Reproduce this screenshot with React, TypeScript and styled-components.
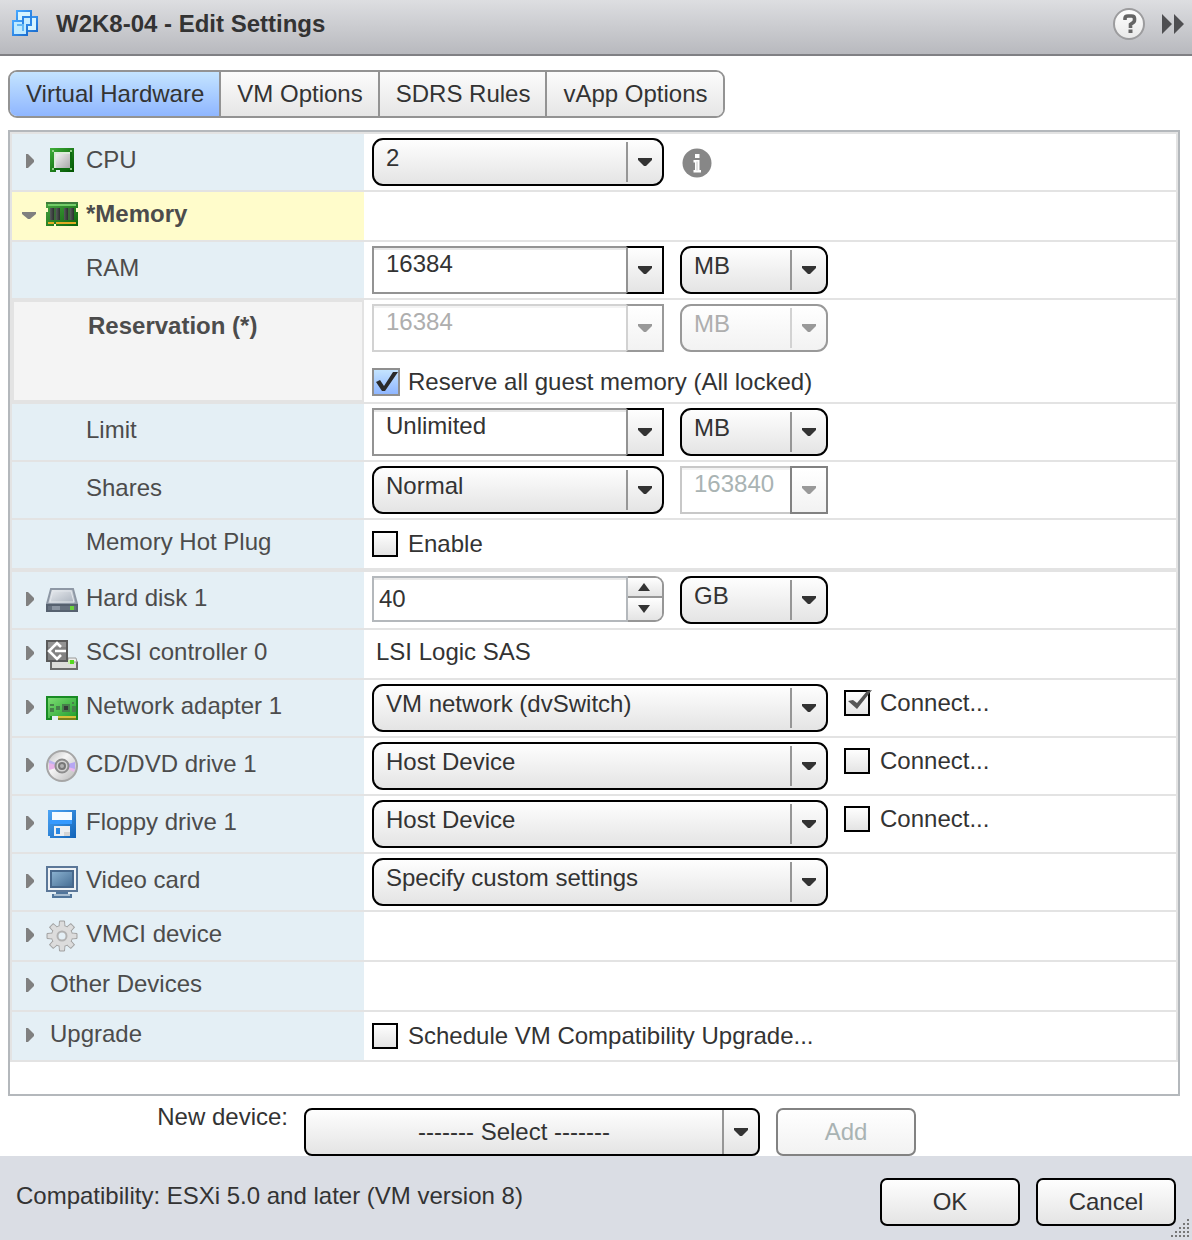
import React, { useState } from "react";
import styled, { createGlobalStyle, css } from "styled-components";

const FONT = '"Liberation Sans", Arial, Helvetica, sans-serif';
const FACE = "linear-gradient(#fefefe, #e4e4e4)";
const FACE_DISABLED = "linear-gradient(#ffffff, #f2f2f2)";
const LINE = "#e3e3e3";

const GlobalStyle = createGlobalStyle`
  *, *::before, *::after { box-sizing: border-box; }
  body { margin: 0; background: #fff; }
  body, button, input, select {
    font-family: ${FONT};
    font-size: 24px;
    line-height: 26px;
    color: #333;
  }
  svg { display: block; flex: none; }
`;

const Dialog = styled.main`
  display: flex;
  flex-direction: column;
  min-height: 100vh;
`;

const TitleBar = styled.header`
  display: flex;
  align-items: center;
  gap: 18px;
  height: 56px;
  padding: 0 7px 6px 12px;
  background: linear-gradient(#dddee1, #b8b9be);
  border-bottom: 2px solid #808084;
`;

const Title = styled.h1`
  flex: 1;
  margin: 0;
  font-size: 24px;
  line-height: 26px;
`;

const TitleActions = styled.div`
  display: flex;
  align-items: center;
  gap: 16px;
`;

const IconButton = styled.button`
  display: flex;
  padding: 0;
  border: 0;
  background: none;
  cursor: pointer;
`;

const Tabs = styled.div`
  display: flex;
  align-self: flex-start;
  height: 48px;
  margin: 14px 8px 12px;
  border: 2px solid #939393;
  border-radius: 9px;
  overflow: hidden;
`;

const Tab = styled.button<{ $active: boolean }>`
  padding: 0 15px 0 16px;
  border: 0;
  background: ${(p) => (p.$active ? "linear-gradient(#c4e4ff, #8fb6ff)" : "linear-gradient(#fcfcfc, #e6e6e6)")};
  white-space: nowrap;
  & + & { border-left: 2px solid #939393; }
`;

const Panel = styled.section`
  margin: 0 12px 0 8px;
  padding-bottom: 32px;
  border: 2px solid #b4b8bc;
`;

const Rows = styled.div`
  border: 2px solid ${LINE};
  border-bottom: 0;
`;

const RowGrid = styled.div<{ $groupEnd?: boolean }>`
  display: grid;
  grid-template-columns: 352px minmax(0, 1fr);
  border-bottom: ${(p) => (p.$groupEnd ? 4 : 2)}px solid ${LINE};
`;

type Tone = "plain" | "changed" | "locked";

const LabelCell = styled.div<{ $tone: Tone; $sub: boolean }>`
  display: flex;
  align-items: center;
  gap: 8px;
  min-height: 48px;
  padding-left: ${(p) => (p.$sub ? 74 : 10)}px;
  color: #4c4c4c;
  background: #e4eff5;
  ${(p) => p.$tone === "changed" && css`background: #fffccb; font-weight: bold;`}
  ${(p) =>
    p.$tone === "locked" &&
    css`
      align-items: flex-start;
      padding-top: 11px;
      background: #f4f4f4;
      border: 2px solid ${LINE};
      font-weight: bold;
    `}
`;

const LabelText = styled.span<{ $indent?: boolean }>`
  padding-bottom: 4px;
  padding-left: ${(p) => (p.$indent ? 4 : 0)}px;
`;

const ValueCell = styled.div`
  display: flex;
  flex-direction: column;
  justify-content: center;
  gap: 16px;
  padding: 0 8px;
`;

const Controls = styled.div`
  display: flex;
  align-items: center;
  gap: 16px;
  padding: 4px 0;
`;

const LockedControls = styled.div`
  display: flex;
  flex-direction: column;
  gap: 16px;
  padding: 4px 0 6px;
`;

const Line = styled.div`
  display: flex;
  gap: 16px;
`;

const ValueText = styled.span`
  padding: 0 4px 4px;
`;

type Size = "small" | "medium" | "large";
const WIDTH: Record<Size, number> = { small: 148, medium: 292, large: 456 };

const SelectFrame = styled.div<{ $size: Size }>`
  display: grid;
  flex: none;
  width: ${(p) => WIDTH[p.$size]}px;
  height: 48px;
  > * { grid-area: 1 / 1; }
`;

const NativeSelect = styled.select<{ $centered?: boolean }>`
  appearance: none;
  width: 100%;
  height: 48px;
  margin: 0;
  padding: 0 38px 8px 12px;
  border: 2px solid #000;
  border-radius: 11px;
  background: ${FACE};
  ${(p) => p.$centered && css`padding: 0 36px 0 0; border-radius: 8px; text-align-last: center;`}
  &:disabled {
    opacity: 1;
    color: #aeaeae;
    border-color: #999;
    background: ${FACE_DISABLED};
  }
`;

const SelectArrow = styled.span<{ $full?: boolean; $disabled?: boolean }>`
  display: flex;
  align-items: center;
  justify-content: center;
  justify-self: end;
  align-self: center;
  width: 38px;
  height: ${(p) => (p.$full ? 44 : 40)}px;
  padding-right: 2px;
  border-left: 2px solid ${(p) => (p.$disabled ? "#d2d2d2" : "#969696")};
  color: ${(p) => (p.$disabled ? "#999" : "#333")};
  pointer-events: none;
`;

const ComboFrame = styled.div<{ $size: Size }>`
  display: flex;
  flex: none;
  width: ${(p) => WIDTH[p.$size]}px;
  height: 48px;
`;

const ComboInput = styled.input<{ $boxed?: boolean }>`
  flex: 1;
  min-width: 0;
  padding: 0 8px 12px 12px;
  border: 2px solid #939393;
  border-right: 0;
  border-radius: 0;
  background: #fff;
  box-shadow: inset 0 2px #e8e8e8;
  &:disabled {
    color: ${(p) => (p.$boxed ? "#a9b3b3" : "#aeaeae")};
    border-color: ${(p) => (p.$boxed ? "#c8c8c8" : "#d2d2d2")};
    box-shadow: inset 0 2px #f3f3f3;
  }
`;

const ComboButton = styled.button<{ $boxed?: boolean }>`
  display: flex;
  align-items: center;
  justify-content: center;
  width: 38px;
  padding: 0;
  border: 2px solid #000;
  border-left-color: #939393;
  background: ${FACE};
  color: #333;
  &:disabled {
    color: #999;
    border-color: ${(p) => (p.$boxed ? "#828282" : "#999")};
    border-left-color: ${(p) => (p.$boxed ? "#828282" : "#d2d2d2")};
    background: ${FACE_DISABLED};
  }
`;

const SpinnerFrame = styled.div`
  display: flex;
  flex: none;
  align-self: flex-start;
  width: 292px;
  height: 46px;
`;

const SpinnerInput = styled.input`
  flex: 1;
  min-width: 0;
  padding: 0 5px;
  border: 2px solid #b4b8bc;
  border-radius: 0;
  background: #fff;
  box-shadow: inset 0 2px #e8e8e8;
  appearance: textfield;
  &::-webkit-inner-spin-button { appearance: none; margin: 0; }
`;

const SpinnerButtons = styled.div`
  display: grid;
  grid-template-rows: 18px 1fr;
  width: 36px;
  border: 2px solid #969696;
  border-left: 0;
  border-radius: 0 9px 9px 0;
  overflow: hidden;
`;

const SpinnerButton = styled.button`
  display: flex;
  align-items: center;
  justify-content: center;
  padding: 0 2px 0 0;
  border: 0;
  background: ${FACE};
  & + & { border-top: 2px solid #969696; }
`;

const CheckLabel = styled.label<{ $top?: boolean }>`
  display: grid;
  grid-template-columns: 28px auto;
  align-items: center;
  justify-content: start;
  gap: 8px;
  ${(p) => p.$top && css`align-self: flex-start; margin-top: 6px;`}
`;

const CheckMark = styled.span`
  display: grid;
  > * { grid-area: 1 / 1; }
  svg { pointer-events: none; }
`;

const CheckBox = styled.input<{ $blue?: boolean }>`
  appearance: none;
  width: ${(p) => (p.$blue ? 28 : 26)}px;
  height: ${(p) => (p.$blue ? 28 : 26)}px;
  margin: 0;
  border: 2px solid ${(p) => (p.$blue ? "#8f8f8f" : "#000")};
  background: ${(p) => (p.$blue ? "linear-gradient(#c4e4ff, #8fb6ff)" : FACE)};
`;

const NewDevice = styled.div`
  display: grid;
  grid-template-columns: 280px auto auto;
  justify-content: start;
  align-items: start;
  column-gap: 16px;
  padding: 12px 8px 0;
`;

const NewDeviceLabel = styled.label`
  margin-top: -4px;
  text-align: right;
`;

const PushButton = styled.button`
  width: 140px;
  height: 48px;
  padding: 0;
  border: 2px solid #000;
  border-radius: 7px;
  background: ${FACE};
  &:disabled {
    color: #a9b3b3;
    border-color: #828282;
    background: ${FACE_DISABLED};
  }
`;

const Footer = styled.footer`
  position: relative;
  display: flex;
  flex: 1;
  align-items: flex-start;
  gap: 16px;
  padding: 22px 16px 14px;
  background: #dadde4;
`;

const Compatibility = styled.p`
  flex: 1;
  margin: 0;
  padding-top: 5px;
`;

const Grip = styled.svg`
  position: absolute;
  right: 2px;
  bottom: 2px;
`;

/* ---- glyphs ---- */

const DownGlyph = () => (
  <svg width="14" height="8" fill="currentColor" aria-hidden="true">
    <path d="M0 0H14V2L8 8H6L0 2Z" />
  </svg>
);

const Triangle = ({ up }: { up?: boolean }) => (
  <svg width="12" height="8" fill="#333" aria-hidden="true">
    <path d={up ? "M6 0L12 8H0Z" : "M0 0H12L6 8Z"} />
  </svg>
);

const Disclosure = ({ open }: { open: boolean }) => (
  <svg width="16" height="16" fill="#808080" aria-hidden="true">
    <path d={open ? "M0 4H14V6L8 11H6L0 6Z" : "M4 0H6L12 6V8L6 14H4Z"} />
  </svg>
);

const VmIcon = () => (
  <svg width="26" height="28" aria-hidden="true">
    <defs>
      <linearGradient id="vm" x1="0" y1="0" x2="1" y2="1">
        <stop offset="0" stopColor="#45a6ff" />
        <stop offset="1" stopColor="#1c6fd0" />
      </linearGradient>
    </defs>
    <g fill="#d6f4ff" stroke="url(#vm)" strokeWidth="2">
      <rect x="5" y="1" width="14" height="14" />
      <rect x="11" y="7" width="14" height="14" />
      <rect x="1" y="11" width="14" height="14" />
    </g>
    <path d="M12 8H18V14H12Z" fill="#c6ecff" />
    <path d="M2 12H14V24H2Z" fill="#bfeaff" />
    <path d="M11 20V7H19V15H15" fill="none" stroke="#2b86e6" strokeWidth="2" />
    <path d="M5 15H11V21" fill="none" stroke="#62b8f5" strokeWidth="2" />
  </svg>
);

const HelpIcon = () => (
  <svg width="32" height="32" aria-hidden="true">
    <defs>
      <linearGradient id="help" x1="0" y1="0" x2="0" y2="1">
        <stop offset="0" stopColor="#fff" />
        <stop offset="1" stopColor="#e8e8e8" />
      </linearGradient>
    </defs>
    <circle cx="16" cy="16" r="15" fill="url(#help)" stroke="#9c9c9e" strokeWidth="2" />
    <path d="M12 12V10.500Q12 8 15 8H18.500Q21.500 8 21.500 10.500V12Q21.500 14 19.500 15L17.500 16.500V20" fill="none" stroke="#666" strokeWidth="3.600" />
    <rect x="15.500" y="21.500" width="4" height="3.500" fill="#666" />
  </svg>
);

const ForwardIcon = () => (
  <svg width="24" height="22" fill="#4f4f52" aria-hidden="true">
    <path d="M1 1L11 11L1 21ZM13 1L23 11L13 21Z" />
  </svg>
);

const InfoIcon = () => (
  <svg width="34" height="34" role="img" aria-label="Information">
    <circle cx="17" cy="18" r="14.500" fill="#878787" />
    <path d="M15 9H19.500V13H15ZM13.500 15H19.500V25H21V27.500H13.500V25H15V17.500H13.500Z" fill="#fff" />
    <path d="M17 16.500V25.500" stroke="#c4c4c4" />
  </svg>
);

const CpuIcon = () => (
  <svg width="32" height="32" shapeRendering="crispEdges" aria-hidden="true">
    <defs>
      <linearGradient id="cpuG" x1="0" y1="0" x2="1" y2="1">
        <stop offset="0" stopColor="#3fae39" />
        <stop offset="1" stopColor="#005200" />
      </linearGradient>
      <linearGradient id="cpuF" x1="0" y1="0" x2="1" y2="1">
        <stop offset="0" stopColor="#f0f0f0" />
        <stop offset="1" stopColor="#a8a8a8" />
      </linearGradient>
    </defs>
    <path d="M4 2H28V26H14V24H10V26H4Z" fill="url(#cpuG)" />
    <path d="M6 4H8V6H6ZM24 4H26V6H24ZM6 22H8V24H6ZM24 22H26V24H24Z" fill="#8fce84" />
    <path d="M8 22H24V24H8ZM24 6H26V22H24Z" fill="#0d6b0f" />
    <rect x="8" y="6" width="16" height="16" fill="#dcebd9" />
    <rect x="10" y="8" width="14" height="14" fill="url(#cpuF)" />
  </svg>
);

const MemoryIcon = () => (
  <svg width="32" height="32" shapeRendering="crispEdges" aria-hidden="true">
    <defs>
      <linearGradient id="mem" x1="0" y1="0" x2="1" y2="1">
        <stop offset="0" stopColor="#4aa443" />
        <stop offset="1" stopColor="#0b650b" />
      </linearGradient>
      <linearGradient id="chip" x1="0" y1="0" x2="1" y2="0">
        <stop offset="0" stopColor="#565b5b" />
        <stop offset="1" stopColor="#2c2f2f" />
      </linearGradient>
    </defs>
    <path d="M0 2H32V8H30V12H32V26H10V24H8V26H0V12H2V8H0Z" fill="url(#mem)" />
    <path d="M0 2H32V4H0Z" fill="#3e7c3b" />
    <path d="M2 4H30V6H2Z" fill="#74cc68" />
    <g fill="url(#chip)">
      <rect x="4" y="8" width="4" height="12" />
      <rect x="10" y="8" width="4" height="12" />
      <rect x="18" y="8" width="4" height="12" />
      <rect x="24" y="8" width="4" height="12" />
    </g>
    <path d="M8 8H10V20H8ZM22 8H24V20H22Z" fill="#3a6a38" />
    <path d="M2 22H8V24H2ZM10 22H30V24H10Z" fill="#e0ab25" />
  </svg>
);

const DiskIcon = () => (
  <svg width="32" height="32" aria-hidden="true">
    <defs>
      <linearGradient id="disk" x1="0" y1="0" x2="1" y2="1">
        <stop offset="0" stopColor="#eef0f3" />
        <stop offset="1" stopColor="#a4adb9" />
      </linearGradient>
    </defs>
    <path d="M5 5H27L31 20H1Z" fill="url(#disk)" stroke="#8e98a5" strokeWidth="2" />
    <path d="M4 18L7 7H25L28 18Z" fill="none" stroke="#e2e6eb" />
    <path d="M0 20H32V28H0Z" fill="#56616f" />
    <path d="M2 22H30V26H2Z" fill="#66717f" />
    <path d="M6 22H14V26H6Z" fill="#8b95a2" />
    <path d="M24 22H28V26H24Z" fill="#6bd13b" />
  </svg>
);

const ScsiIcon = () => (
  <svg width="32" height="32" aria-hidden="true">
    <path d="M4 22H30L32 24V32H4Z" fill="#6d6d6b" />
    <path d="M6 24H30V30H6Z" fill="#dededa" />
    <path d="M22 20H30L31 24H22Z" fill="#efefec" stroke="#9a9a98" />
    <path d="M22 22H28V26H22Z" fill="#c9efab" />
    <path d="M24 22H28V26H24Z" fill="#55d81f" />
    <path d="M1 3H21V23H1Z" fill="#828282" stroke="#5a5a5a" strokeWidth="2" />
    <path d="M2 4H20V9H2Z" fill="#949494" />
    <path d="M15 9L11 5L3 13L11 21L15 17M9 13H20" fill="none" stroke="#fff" strokeWidth="2.600" />
  </svg>
);

const NetworkIcon = () => (
  <svg width="32" height="32" shapeRendering="crispEdges" aria-hidden="true">
    <defs>
      <linearGradient id="net" x1="0" y1="0" x2="1" y2="1">
        <stop offset="0" stopColor="#7cdc72" />
        <stop offset="1" stopColor="#229f2e" />
      </linearGradient>
    </defs>
    <path d="M0 4H32V28H12V24H6V28H0Z" fill="#188b24" />
    <path d="M2 6H30V24H4V26H2Z" fill="url(#net)" />
    <path d="M12 24H30V26H12Z" fill="#d5c23a" />
    <path d="M12 26H30V28H12Z" fill="#79801b" />
    <path d="M4 12H8V14H4ZM4 16H8V20H4ZM10 14H14V18H10ZM16 12H24V20H16ZM26 10H28V12H26ZM26 14H30V20H26Z" fill="#47804b" />
    <path d="M18 14H22V18H18Z" fill="#343b38" />
  </svg>
);

const DiscIcon = () => (
  <svg width="32" height="32" aria-hidden="true">
    <defs>
      <linearGradient id="cd" x1="0" y1="0" x2="1" y2="1">
        <stop offset="0" stopColor="#bdbdbd" />
        <stop offset="0.400" stopColor="#f5f5f5" />
        <stop offset="1" stopColor="#b5b5b5" />
      </linearGradient>
    </defs>
    <circle cx="16" cy="16" r="15" fill="url(#cd)" stroke="#a6a6a6" strokeWidth="2" />
    <path d="M3 12L10 14V18L3 20Z" fill="#e8b4ea" />
    <path d="M3 10L10 13V15L3 13Z" fill="#bdb4ef" />
    <path d="M29 12L22 14V18L29 20Z" fill="#b6a7f3" />
    <path d="M29 19L22 17V19L28 22Z" fill="#e9b8ea" />
    <circle cx="16" cy="16" r="6.500" fill="#d4d4d4" stroke="#8c8c8c" strokeWidth="2" />
    <circle cx="16" cy="16" r="3" fill="#b2b2b2" stroke="#777" strokeWidth="2" />
  </svg>
);

const FloppyIcon = () => (
  <svg width="32" height="32" shapeRendering="crispEdges" aria-hidden="true">
    <defs>
      <linearGradient id="fl" x1="0" y1="0" x2="1" y2="1">
        <stop offset="0" stopColor="#4ba4f5" />
        <stop offset="1" stopColor="#1263b7" />
      </linearGradient>
    </defs>
    <path d="M2 2H30V30H4V28H2Z" fill="url(#fl)" />
    <path d="M6 4H26V12H6Z" fill="#f4faff" />
    <path d="M4 12H26V16H4Z" fill="#369aff" />
    <path d="M8 18H24V28H8Z" fill="#eceff2" />
    <path d="M10 20H14V26H10Z" fill="#2b88e2" />
    <path d="M18 24H24V28H18Z" fill="#d5d5d5" />
  </svg>
);

const VideoIcon = () => (
  <svg width="32" height="32" shapeRendering="crispEdges" aria-hidden="true">
    <defs>
      <linearGradient id="vid" x1="0" y1="0" x2="1" y2="1">
        <stop offset="0" stopColor="#8db4d2" />
        <stop offset="1" stopColor="#446c93" />
      </linearGradient>
    </defs>
    <rect x="1" y="1" width="30" height="24" fill="#eef2f5" stroke="#5b7798" strokeWidth="2" />
    <rect x="5" y="5" width="22" height="16" fill="url(#vid)" stroke="#47688c" strokeWidth="2" />
    <path d="M10 26H22V28H26V32H6V28H10Z" fill="#52769b" />
    <path d="M8 28H24V30H8Z" fill="#a7bccf" />
  </svg>
);

const GearIcon = () => (
  <svg width="32" height="32" aria-hidden="true">
    <g fill="#d6d6d6" stroke="#a2a2a2">
      {[0, 45, 90, 135, 180, 225, 270, 315].map((angle) => (
        <path key={angle} d="M13 8L13.500 1H18.500L19 8Z" transform={`rotate(${angle} 16 16)`} />
      ))}
      <circle cx="16" cy="16" r="10.500" />
    </g>
    <g fill="#dcdcdc">
      {[0, 45, 90, 135, 180, 225, 270, 315].map((angle) => (
        <path key={angle} d="M13.500 8L14 2H18L18.500 8Z" transform={`rotate(${angle} 16 16)`} />
      ))}
      <circle cx="16" cy="16" r="10" />
    </g>
    <circle cx="16" cy="16" r="4.500" fill="#e4eff5" stroke="#b2b2b2" strokeWidth="2" />
  </svg>
);

/* ---- controls ---- */

type SelectProps = { label: string; value: string; size: Size; disabled?: boolean };

const Select = ({ label, value, size, disabled }: SelectProps) => (
  <SelectFrame $size={size}>
    <NativeSelect aria-label={label} disabled={disabled}>
      <option>{value}</option>
    </NativeSelect>
    <SelectArrow $disabled={disabled}>
      <DownGlyph />
    </SelectArrow>
  </SelectFrame>
);

const Combo = ({ label, value, size, disabled, boxed }: SelectProps & { boxed?: boolean }) => (
  <ComboFrame $size={size}>
    <ComboInput aria-label={label} defaultValue={value} disabled={disabled} $boxed={boxed} />
    <ComboButton aria-label={`${label} choices`} disabled={disabled} $boxed={boxed}>
      <DownGlyph />
    </ComboButton>
  </ComboFrame>
);

const Spinner = ({ label, initial }: { label: string; initial: number }) => {
  const [value, setValue] = useState(initial);
  return (
    <SpinnerFrame>
      <SpinnerInput type="number" aria-label={label} value={value} onChange={(e) => setValue(Number(e.target.value))} />
      <SpinnerButtons>
        <SpinnerButton aria-label="Increase" onClick={() => setValue(value + 1)}>
          <Triangle up />
        </SpinnerButton>
        <SpinnerButton aria-label="Decrease" onClick={() => setValue(value - 1)}>
          <Triangle />
        </SpinnerButton>
      </SpinnerButtons>
    </SpinnerFrame>
  );
};

type CheckProps = { text: string; initial?: boolean; blue?: boolean; top?: boolean };

const Check = ({ text, initial = false, blue, top }: CheckProps) => {
  const [checked, setChecked] = useState(initial);
  return (
    <CheckLabel $top={top}>
      <CheckMark>
        <CheckBox type="checkbox" $blue={blue} checked={checked} onChange={() => setChecked(!checked)} />
        {checked && (
          <svg width="28" height={blue ? 28 : 26} aria-hidden="true">
            {blue ? (
              <path d="M4 14L8 12L12 18L21 4H26L13 23H10Z" fill="#2b2b2b" />
            ) : (
              <path d="M4 11L9 10L13 13L23 1L28 0L13 19Z" fill="#555" />
            )}
          </svg>
        )}
      </CheckMark>
      {text}
    </CheckLabel>
  );
};

type RowProps = {
  label: string;
  icon?: React.ReactNode;
  sub?: boolean;
  open?: boolean;
  tone?: Tone;
  groupEnd?: boolean;
  children?: React.ReactNode;
};

const Row = ({ label, icon, sub = false, open = false, tone = "plain", groupEnd, children }: RowProps) => (
  <RowGrid $groupEnd={groupEnd}>
    <LabelCell $tone={tone} $sub={sub}>
      {!sub && (
        <IconButton aria-label={`Toggle ${label}`} aria-expanded={open}>
          <Disclosure open={open} />
        </IconButton>
      )}
      {icon}
      <LabelText $indent={!sub && !icon}>{label}</LabelText>
    </LabelCell>
    <ValueCell>{children}</ValueCell>
  </RowGrid>
);

const TABS = ["Virtual Hardware", "VM Options", "SDRS Rules", "vApp Options"];

export default function App() {
  const [tab, setTab] = useState(TABS[0]);
  return (
    <Dialog>
      <GlobalStyle />
      <TitleBar>
        <VmIcon />
        <Title>W2K8-04 - Edit Settings</Title>
        <TitleActions>
          <IconButton aria-label="Help">
            <HelpIcon />
          </IconButton>
          <IconButton aria-label="Collapse dialog">
            <ForwardIcon />
          </IconButton>
        </TitleActions>
      </TitleBar>

      <Tabs role="tablist">
        {TABS.map((name) => (
          <Tab key={name} role="tab" aria-selected={tab === name} $active={tab === name} onClick={() => setTab(name)}>
            {name}
          </Tab>
        ))}
      </Tabs>

      <Panel>
        <Rows>
          <Row label="CPU" icon={<CpuIcon />}>
            <Controls>
              <Select label="CPU count" value="2" size="medium" />
              <InfoIcon />
            </Controls>
          </Row>
          <Row label="*Memory" icon={<MemoryIcon />} tone="changed" open />
          <Row label="RAM" sub>
            <Controls>
              <Combo label="RAM" value="16384" size="medium" />
              <Select label="RAM unit" value="MB" size="small" />
            </Controls>
          </Row>
          <Row label="Reservation (*)" sub tone="locked">
            <LockedControls>
              <Line>
                <Combo label="Reservation" value="16384" size="medium" disabled />
                <Select label="Reservation unit" value="MB" size="small" disabled />
              </Line>
              <Check text="Reserve all guest memory (All locked)" initial blue />
            </LockedControls>
          </Row>
          <Row label="Limit" sub>
            <Controls>
              <Combo label="Limit" value="Unlimited" size="medium" />
              <Select label="Limit unit" value="MB" size="small" />
            </Controls>
          </Row>
          <Row label="Shares" sub>
            <Controls>
              <Select label="Shares" value="Normal" size="medium" />
              <Combo label="Share count" value="163840" size="small" disabled boxed />
            </Controls>
          </Row>
          <Row label="Memory Hot Plug" sub groupEnd>
            <Check text="Enable" />
          </Row>
          <Row label="Hard disk 1" icon={<DiskIcon />}>
            <Controls>
              <Spinner label="Hard disk size" initial={40} />
              <Select label="Hard disk unit" value="GB" size="small" />
            </Controls>
          </Row>
          <Row label="SCSI controller 0" icon={<ScsiIcon />}>
            <ValueText>LSI Logic SAS</ValueText>
          </Row>
          <Row label="Network adapter 1" icon={<NetworkIcon />}>
            <Controls>
              <Select label="Network" value="VM network (dvSwitch)" size="large" />
              <Check text="Connect..." initial top />
            </Controls>
          </Row>
          <Row label="CD/DVD drive 1" icon={<DiscIcon />}>
            <Controls>
              <Select label="CD/DVD source" value="Host Device" size="large" />
              <Check text="Connect..." top />
            </Controls>
          </Row>
          <Row label="Floppy drive 1" icon={<FloppyIcon />}>
            <Controls>
              <Select label="Floppy source" value="Host Device" size="large" />
              <Check text="Connect..." top />
            </Controls>
          </Row>
          <Row label="Video card" icon={<VideoIcon />}>
            <Controls>
              <Select label="Video settings" value="Specify custom settings" size="large" />
            </Controls>
          </Row>
          <Row label="VMCI device" icon={<GearIcon />} />
          <Row label="Other Devices" />
          <Row label="Upgrade">
            <Check text="Schedule VM Compatibility Upgrade..." />
          </Row>
        </Rows>
      </Panel>

      <NewDevice>
        <NewDeviceLabel htmlFor="new-device">New device:</NewDeviceLabel>
        <SelectFrame $size="large">
          <NativeSelect id="new-device" $centered>
            <option>------- Select -------</option>
          </NativeSelect>
          <SelectArrow $full>
            <DownGlyph />
          </SelectArrow>
        </SelectFrame>
        <PushButton disabled>Add</PushButton>
      </NewDevice>

      <Footer>
        <Compatibility>Compatibility: ESXi 5.0 and later (VM version 8)</Compatibility>
        <PushButton>OK</PushButton>
        <PushButton>Cancel</PushButton>
        <Grip width="20" height="20" fill="#777" shapeRendering="crispEdges" aria-hidden="true">
          {[0, 1, 2, 3, 4].map((row) =>
            Array.from({ length: row + 1 }, (_, i) => (
              <rect key={`${row}-${i}`} x={17 - i * 4} y={1 + row * 4} width="2" height="2" />
            )),
          )}
        </Grip>
      </Footer>
    </Dialog>
  );
}
